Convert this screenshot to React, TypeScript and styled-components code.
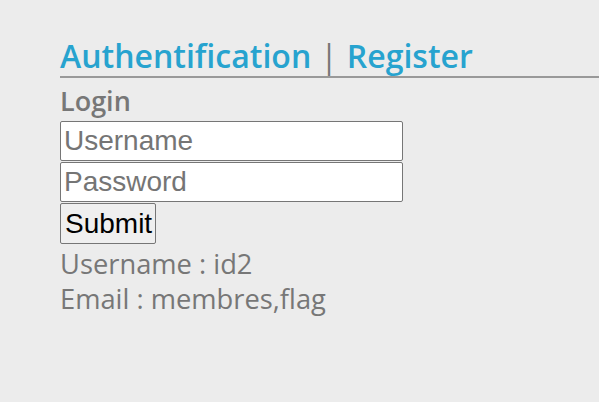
import React from 'react'
import styled, { createGlobalStyle } from 'styled-components'

const GlobalStyle = createGlobalStyle`
	html, body {
		margin: 0;
		padding: 0;
		background: #ececec;
	}
	body {
		font-family: "Open Sans", "Liberation Sans", sans-serif;
		color: #777;
	}
`

const Page = styled.div`
	min-height: 402px;
	padding: 35px 0 0 60px;
	box-sizing: border-box;
`

const Title = styled.h1`
	margin: 0;
	font-size: 32px;
	font-weight: 600;
	line-height: 41px;
	color: #27a3cf;
	border-bottom: 2px solid #999;
`

const Separator = styled.span`
	color: #777;
	font-weight: 400;
	margin: 0 9px;
`

const SubTitle = styled.h2`
	margin: 0;
	padding-top: 3px;
	font-size: 27px;
	font-weight: 600;
	line-height: 40px;
	color: #777;
`

const Form = styled.form`
	display: flex;
	flex-direction: column;
	align-items: flex-start;
	gap: 1px;
`

const Field = styled.input`
	width: 343px;
	height: 40px;
	box-sizing: border-box;
	border: 1px solid #767676;
	border-radius: 2px;
	padding: 0 3px;
	font-family: "Liberation Sans", Arial, sans-serif;
	font-size: 28px;
	background: #fff;
	&::placeholder {
		color: #757575;
	}
`

const Button = styled.button`
	height: 41px;
	width: 96px;
	box-sizing: border-box;
	border: 1px solid #767676;
	border-radius: 2px;
	background: #efefef;
	font-family: "Liberation Sans", Arial, sans-serif;
	font-size: 28px;
	color: #000;
	padding: 0 4px;
`

const Info = styled.div`
	margin-top: 2px;
	font-size: 27.3px;
	line-height: 35px;
	color: #777;
`

export default function App() {
	return (
		<>
			<GlobalStyle />
			<Page>
				<Title>
					Authentification<Separator>|</Separator>Register
				</Title>
				<SubTitle>Login</SubTitle>
				<Form onSubmit={e => e.preventDefault()}>
					<Field type='text' placeholder='Username' />
					<Field type='password' placeholder='Password' />
					<Button type='submit'>Submit</Button>
				</Form>
				<Info>
					<div>Username : id2</div>
					<div>Email : membres,flag</div>
				</Info>
			</Page>
		</>
	)
}
